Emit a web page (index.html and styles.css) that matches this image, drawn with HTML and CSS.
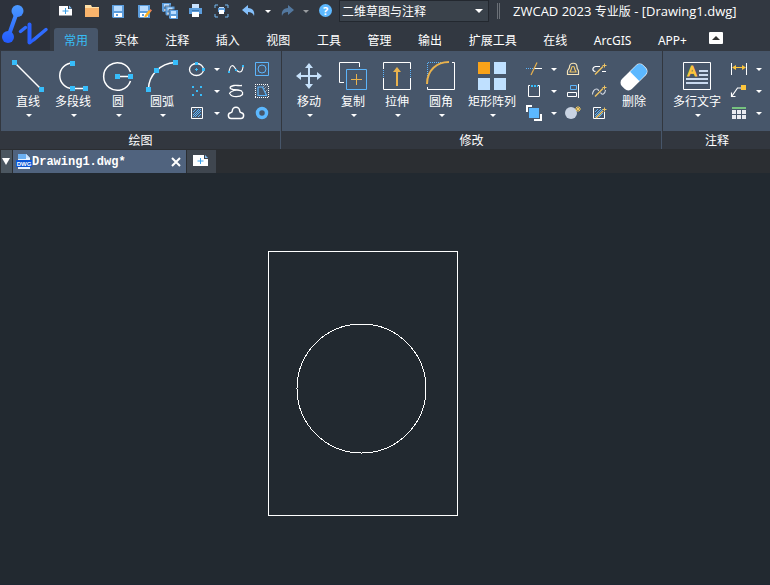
FILE: index.html
```html
<!DOCTYPE html>
<html lang="zh-CN">
<head>
<meta charset="utf-8">
<title>ZWCAD 2023</title>
<link rel="stylesheet" href="styles.css">
</head>
<body>
<header class="header">
  <button class="logo" aria-label="ZWCAD">
    <svg width="50" height="50" viewBox="0 0 50 50" fill="none" stroke-linecap="round" stroke-linejoin="round">
      <defs><linearGradient id="brand" gradientUnits="userSpaceOnUse" x1="0" y1="6" x2="0" y2="44"><stop offset="0" stop-color="#4a98ff"/><stop offset="1" stop-color="#2158ff"/></linearGradient></defs>
      <path d="M17 12 8.500 36" stroke="url(#brand)" stroke-width="4"/>
      <path d="m20.500 31.500 5-4M34 39.500 46 29.500" stroke="#2f6cff" stroke-width="3.500"/>
      <path d="M29.500 24.500V42.500" stroke="#2960ff" stroke-width="4"/>
      <path d="m30 42.500 4-3" stroke="#2960ff" stroke-width="3"/>
      <g fill="url(#brand)"><circle cx="17.500" cy="11" r="6"/><circle cx="8" cy="37" r="6"/></g>
    </svg>
  </button>
  <div class="header-main">
    <div class="quickbar">
      <button class="quick" aria-label="新建"><svg class="ico" viewBox="0 0 16 16"><path d="M2 3h9v3h4v6.500H2z" fill="#fff"/><path d="M12 2.500 15 5.500h-3z" fill="#7fbdf5"/><path d="M8.500 5v6M5.500 8h6" stroke="#3aa0e8"/></svg></button>
      <button class="quick" aria-label="打开"><svg class="ico" viewBox="0 0 16 16"><path d="M2 2h6l1 2h7v4H2z" fill="#ffe0a6"/><path d="M2 5h14v9H2z" fill="#f9b46c"/></svg></button>
      <button class="quick" aria-label="保存"><svg class="ico" viewBox="0 0 16 16"><path d="M3 2h12v13H4l-1-1z" fill="#5c9ddc"/><path d="M5 3h8v5H5z" fill="#b9dcff"/><path d="M5 10h8v4H5z" fill="#fff"/><path d="M7 11h2v2H7z" fill="#5c9ddc"/></svg></button>
      <button class="quick" aria-label="另存为"><svg class="ico" viewBox="0 0 16 16"><path d="M3 2h12v13H4l-1-1z" fill="#5c9ddc"/><path d="M5 3h8v5H5z" fill="#b9dcff"/><path d="M5 10h8v4H5z" fill="#fff"/><path d="M7 11h2v2H7z" fill="#5c9ddc"/><path d="m9 15 1-3 4-5 2 1.500-4 5z" fill="#ffb320"/><path d="m14 8 1.500-2L17 7.500 15.500 9z" fill="#e98158"/></svg></button>
      <button class="quick" aria-label="全部保存"><svg class="ico" viewBox="0 0 16 16"><g id="disk"><path d="M1 0h9v9H2L1 8z" fill="#5c9ddc"/><path d="M3 1h5v3H3z" fill="#b9dcff"/><path d="M3 6h5v2H3z" fill="#fff"/></g><use href="#disk" x="3.500" y="3.500"/><use href="#disk" x="7" y="7"/><path d="M4 9V3h7M8 13V6.500h6" fill="none" stroke="#323842" stroke-width=".6"/></svg></button>
      <button class="quick" aria-label="打印"><svg class="ico" viewBox="0 0 16 16"><path d="M5 1h7v4H5z" fill="#c8e2ff"/><path d="M2 5h13v6H2z" fill="#5c9ddc"/><path d="M5 7h7v1H5z" fill="#3e78b0"/><path d="M5 9h7v5H5z" fill="#fff"/></svg></button>
      <button class="quick" aria-label="打印预览"><svg class="ico" viewBox="0 0 16 16"><path d="M2 5V2h3M12 2h3v3M15 11v3h-3M5 14H2v-3" fill="none" stroke="#75b8f0"/><path d="M6 4h5v2H6z" fill="#c8e2ff"/><path d="M5 5h7v4H5z" fill="#5c9ddc"/><path d="M6 7h5v4H6z" fill="#fff"/></svg></button>
      <button class="quick undo" aria-label="撤销"><svg class="ico" viewBox="0 0 16 16"><path d="m1 7 6-5v3c5 0 7 4 6 8-1-3-3-4-6-4v3z" fill="#85c0fb"/></svg></button>
      <button class="drop" aria-label="撤销列表"><span class="caret"></span></button>
      <button class="quick" aria-label="重做"><svg class="ico" viewBox="0 0 16 16"><path d="M15 7 9 2v3C4 5 2 9 3 13c1-3 3-4 6-4v3z" fill="#53789f"/></svg></button>
      <button class="drop dim" aria-label="重做列表"><span class="caret"></span></button>
      <button class="quick" aria-label="帮助"><svg class="ico" viewBox="0 0 16 16"><circle cx="8.500" cy="7.500" r="6.500" fill="#5db8ff"/><text x="8.500" y="11.500" class="help-mark">?</text></svg></button>
      <label class="workspace"><select aria-label="工作空间"><option>二维草图与注释</option></select></label>
      <span class="grip"></span>
      <h1 class="title">ZWCAD 2023 <span class="cjk">专业版</span> - [Drawing1.dwg]</h1>
    </div>
    <div class="tabrow">
      <nav class="tabs">
        <button class="tab active">常用</button>
        <button class="tab">实体</button>
        <button class="tab">注释</button>
        <button class="tab">插入</button>
        <button class="tab">视图</button>
        <button class="tab">工具</button>
        <button class="tab">管理</button>
        <button class="tab">输出</button>
        <button class="tab">扩展工具</button>
        <button class="tab">在线</button>
        <button class="tab">ArcGIS</button>
        <button class="tab">APP+</button>
      </nav>
      <button class="collapse" aria-label="最小化功能区"></button>
    </div>
  </div>
</header>

<section class="ribbon">
  <section class="group">
    <div class="tools">
      <button class="tool"><svg class="big" viewBox="0 0 32 32"><path d="m2 2 27 27" stroke="#fff" stroke-width="1.500"/><path d="M0 0h5v5H0zM27 27h5v5h-5z" fill="#37bdfb"/></svg>直线<span class="caret"></span></button>
      <button class="tool mid"><svg class="big" viewBox="0 0 32 32"><path d="M15.500 3a12.700 12.700 0 0 0 0 25.500H28" fill="none" stroke="#fff" stroke-width="1.500"/><path d="M13 1h5v5h-5zM13 26h5v5h-5zM26 26h5v5h-5z" fill="#37bdfb"/></svg>多段线<span class="caret"></span></button>
      <button class="tool"><svg class="big" viewBox="0 0 32 32"><path d="M28.500 12a13.800 13.800 0 1 0 0 9M15 16.500h13" fill="none" stroke="#fff" stroke-width="1.500"/><path d="M13 14h5v5h-5zM26 14h5v5h-5z" fill="#37bdfb"/></svg>圆<span class="caret"></span></button>
      <button class="tool"><svg class="big" viewBox="0 0 32 32"><path d="M2.500 29C2.500 16 14 3 29 2.500" fill="none" stroke="#fff" stroke-width="1.500"/><path d="M0 27h5v5H0zM8 8h5v5H8zM27 0h5v5h-5z" fill="#37bdfb"/></svg>圆弧<span class="caret"></span></button>
      <div class="minis draw">
        <button class="mini" aria-label="椭圆"><svg class="ico" viewBox="0 0 16 16"><ellipse cx="7.500" cy="8.500" rx="7" ry="6" fill="none" stroke="#fff" stroke-width="1.300"/><path d="M6 1h3v3H6zM13 7h3v3h-3zM7 7h1v1h1v1H8v1H7V9H6V8h1z" fill="#37bdfb"/></svg></button>
        <button class="drop" aria-label="椭圆选项"><span class="caret"></span></button>
        <button class="mini" aria-label="样条曲线"><svg class="ico" viewBox="0 0 16 16"><path d="M1 11C2 4 5 3 7 7s7 7 8-1" fill="none" stroke="#fff" stroke-width="1.100"/><path d="M0 10h2v2H0zM7 8h2v2H7zM14 4h2v2h-2z" fill="#37bdfb"/></svg></button>
        <button class="mini" aria-label="面域"><svg class="ico" viewBox="0 0 16 16" fill="none" stroke="#5cb4fa"><path d="M1.500 1.500h13v13h-13z"/><circle cx="8" cy="8" r="4"/></svg></button>
        <button class="mini" aria-label="点"><svg class="ico" viewBox="0 0 16 16"><path d="M3 3h2v2H3zM11 3h2v2h-2zM7 7h2v2H7zM3 11h2v2H3zM11 11h2v2h-2z" fill="#37bdfb"/></svg></button>
        <button class="drop" aria-label="点选项"><span class="caret"></span></button>
        <button class="mini" aria-label="螺旋"><svg class="ico" viewBox="0 0 16 16"><path d="M14 2.500C11 3 9 2 6 2.500 1 3.500 1 6 5 6.500c4 .2 9 0 9 2.500M14 8C11 7 9 6.500 6 7.500c-3 1-4.500 1.500-4.500 3.500M2 11c2 3.500 10 3.500 12.500.500V9" fill="none" stroke="#fff" stroke-width="1.300"/></svg></button>
        <button class="mini" aria-label="边界"><svg class="ico" viewBox="0 0 16 16" fill="none"><path d="M1 1.500h14M1 14.500h14M1.500 3v11M14.500 3v11" stroke="#fff" stroke-dasharray="1 1"/><path d="M4 4h4.500L12.500 12.500H4z" stroke="#5cb4fa" stroke-width="1.200"/><path d="m9 4 2-2M10 6l4-4M11 9l3-3" stroke="#d6e8fb" stroke-width=".8" stroke-dasharray="1 1"/></svg></button>
        <button class="mini" aria-label="图案填充"><svg class="ico" viewBox="0 0 16 16" fill="none"><path d="M2.500 2.500h11v11h-11z" stroke="#fff"/><path d="m4 7 3-3M4 10l6-6M4 12l8-8M6 12l6-6M9 12l3-3" stroke="#5cb4fa"/></svg></button>
        <button class="drop" aria-label="填充选项"><span class="caret"></span></button>
        <button class="mini" aria-label="修订云线"><svg class="ico" viewBox="0 0 16 16"><path d="M3 13.500C0 13.500-.5 9 2 8c1.500-.3 2.300-.5 2.300-2a3.700 3.700 0 0 1 7.400 0c0 1.500.8 1.700 2.300 2 2.500 1 2 5.500-1 5.500z" fill="none" stroke="#fff" stroke-width="1.500"/></svg></button>
        <button class="mini" aria-label="圆环"><svg class="ico" viewBox="0 0 16 16"><circle cx="8" cy="8" r="4.500" fill="none" stroke="#5cb8ff" stroke-width="3.500"/></svg></button>
      </div>
    </div>
    <h2 class="group-title">绘图</h2>
  </section>

  <section class="group">
    <div class="tools">
      <button class="tool"><svg class="big" viewBox="0 0 32 32"><path d="M16 6v20M6 16h20" stroke="#c6e1fb" stroke-width="2"/><path d="m16 3 4 5h-8zM16 29l-4-5h8zM3 16l5-4v8zM29 16l-5 4v-8z" fill="#c6e1fb"/></svg>移动<span class="caret"></span></button>
      <button class="tool"><svg class="big" viewBox="0 0 32 32" fill="none"><path d="M7 22.500H2.500v-20h20V7" stroke="#fff"/><path d="M9.500 9.500h20v20h-20z" stroke="#5cb4fa"/><path d="M19.500 14v11M14 19.500h11" stroke="#e9b24d"/></svg>复制<span class="caret"></span></button>
      <button class="tool"><svg class="big" viewBox="0 0 32 32" fill="none"><path d="M2.500 9V2.500h27V9M2.500 18v11.500h27V18" stroke="#fff"/><path d="M2.500 10v8M29.500 10v8" stroke="#5cb4fa" stroke-dasharray="1 1"/><path d="M16 10v16" stroke="#e9b24d" stroke-width="2"/><path d="m16 7 4 5h-8z" fill="#e9b24d"/></svg>拉伸<span class="caret"></span></button>
      <button class="tool"><svg class="big" viewBox="0 0 32 32" fill="none"><path d="M27 2.500h2.500v27h-27V27" stroke="#fff"/><path d="M2.500 22V2.500H22" stroke="#5cb4fa" stroke-dasharray="1 1"/><path d="M2 24C2 10 12 2 24 2" stroke="#e9b24d" stroke-width="2"/></svg>圆角<span class="caret"></span></button>
      <button class="tool wide"><svg class="big" viewBox="0 0 32 32"><path d="M2 2h12v12H2z" fill="#f9a31a"/><path d="M18 2h12v12H18zM2 18h12v12H2zM18 18h12v12H18z" fill="#bfe0ff"/></svg>矩形阵列<span class="caret"></span></button>
      <div class="minis modify">
        <button class="mini" aria-label="修剪"><svg class="ico" viewBox="0 0 16 16" fill="none"><path d="M0 7.500h8" stroke="#5cb4fa" stroke-dasharray="1 1"/><path d="M8 7.500h8" stroke="#fff"/><path d="M11 1.500 5 14" stroke="#e9b24d" stroke-width="1.200"/></svg></button>
        <button class="drop" aria-label="修剪选项"><span class="caret"></span></button>
        <button class="mini" aria-label="偏移"><svg class="ico" viewBox="0 0 16 16" fill="none"><path d="M2.500 13.500V10C2.500 8.500 4.500 8.500 4.500 6c0-5 7.500-5 7.500 0 0 2.500 1.500 2.500 1.500 4v3.500z" stroke="#f5e3b8" stroke-width="1.200"/><path d="M5 11h6c0-1.500-1.500-2-1.500-4S6.500 5 6.500 7 5 9.500 5 11z" stroke="#efc463" stroke-width="1.200"/></svg></button>
        <button class="mini" aria-label="打断"><svg class="ico" viewBox="0 0 16 16" fill="none"><path d="M9 5.500H4.500C1 6.500 1 10 4.500 10.500M11 10.500h4" stroke="#fff" stroke-width="1.200"/><path d="m4 13.500 8-8" stroke="#efc463" stroke-width="1.500"/><path d="M13.500 2.500v4M11.500 4.500h4" stroke="#efc463"/></svg></button>
        <button class="mini" aria-label="打断于点"><svg class="ico" viewBox="0 0 16 16" fill="none"><path d="M4 2.500H2.500v11h11v-11H12" stroke="#fff"/><path d="M5 2h2v2H5zM8 2h2v2H8zM11 2h1v2h-1z" fill="#37bdfb"/></svg></button>
        <button class="drop" aria-label="打断选项"><span class="caret"></span></button>
        <button class="mini" aria-label="对齐"><svg class="ico" viewBox="0 0 16 16" fill="none"><path d="M2.500 9.500h9v4h-9zM13.500 1v14" stroke="#fff"/><path d="M5.500 2.500h6v4h-6z" stroke="#5cb4fa"/></svg></button>
        <button class="mini" aria-label="编辑样条曲线"><svg class="ico" viewBox="0 0 16 16" fill="none"><path d="M1.500 11.500c0-3 2-5.500 4-5.500 1.500 0 2 1 2 2M9.500 9.500c1.500 3 4.500 2 5-2.500" stroke="#d5dbe5" stroke-width="1.100"/><path d="m4 13.500 8-8" stroke="#efc463" stroke-width="1.500"/><path d="M13.500 2.500v4M11.500 4.500h4" stroke="#efc463"/></svg></button>
        <button class="mini" aria-label="绘图次序"><svg class="ico" viewBox="0 0 16 16"><path d="M0 0h6v2H2v5H0zM14 9h2v7H8v-2h6z" fill="#fff"/><path d="M3 3h10v10H3z" fill="#5cb8ff"/></svg></button>
        <button class="drop" aria-label="次序选项"><span class="caret"></span></button>
        <button class="mini" aria-label="分解"><svg class="ico" viewBox="0 0 16 16"><circle cx="6" cy="8" r="6" fill="#c9d3e2"/><path d="M13 1v6M10 4h6M11 2l4 4M15 2l-4 4" stroke="#f4c95c"/></svg></button>
        <button class="mini" aria-label="编辑填充"><svg class="ico" viewBox="0 0 16 16" fill="none"><path d="M10 2.500H2.500v11h11V7" stroke="#fff"/><path d="m4 7 3-3M4 10l6-6M4 12l8-8M8 12l4-4" stroke="#5cb4fa"/><path d="m5 13 7-7" stroke="#efc463" stroke-width="1.500"/><path d="M13.500 2.500v4M11.500 4.500h4" stroke="#efc463"/></svg></button>
      </div>
      <button class="tool"><svg class="big" viewBox="0 0 32 32"><g transform="translate(16 17) rotate(-45)"><rect x="-15" y="-7" width="30" height="14" rx="5" fill="#fff"/><path d="M1-6.500h9a4.500 4.500 0 0 1 4.500 4.500v4a4.500 4.500 0 0 1-4.500 4.500H1z" fill="#5cb8ff"/></g></svg>删除</button>
    </div>
    <h2 class="group-title">修改</h2>
  </section>

  <section class="group last">
    <div class="tools">
      <button class="tool wide"><svg class="big" viewBox="0 0 32 32" fill="none"><path d="M2.500 2.500h27v27h-27z" stroke="#fff"/><path d="M18 11h9M18 15h9M5 19h22M5 23h22" stroke="#c9d9ee" stroke-width="2"/><text x="11" y="16" class="mtext-mark">A</text></svg>多行文字<span class="caret"></span></button>
      <div class="minis annotate">
        <button class="mini" aria-label="标注"><svg class="ico" viewBox="0 0 16 16"><path d="M.5 2v12M15.500 2v12" stroke="#fff"/><path d="M3 6.500h10" stroke="#fcc53c"/><path d="m1 6.500 4-2.500v5zM15 6.500 11 4v5z" fill="#fcc53c"/></svg></button>
        <button class="drop" aria-label="标注选项"><span class="caret"></span></button>
        <button class="mini" aria-label="引线"><svg class="ico" viewBox="0 0 16 16"><path d="M10 5H6.500L1 13M.5 9.500v4h4" fill="none" stroke="#fff" stroke-width="1.200"/><path d="M10 2h5v5h-5z" fill="#fcc53c"/></svg></button>
        <button class="drop" aria-label="引线选项"><span class="caret"></span></button>
        <button class="mini" aria-label="表格"><svg class="ico" viewBox="0 0 16 16"><path d="M1 2h14v2H1z" fill="#76c27f"/><path d="M1 5h4v4H1zM6 5h4v4H6zM11 5h4v4h-4zM1 10h4v4H1zM6 10h4v4H6zM11 10h4v4h-4z" fill="#e9eaf0"/></svg></button>
        <button class="drop" aria-label="表格选项"><span class="caret"></span></button>
      </div>
    </div>
    <h2 class="group-title">注释</h2>
  </section>
</section>

<nav class="files">
  <button class="file-list" aria-label="文件列表"></button>
  <div class="file">
    <svg class="ico" viewBox="0 0 16 16"><path d="M2 0h8l4 4v11H2z" fill="#e8f2ff"/><path d="M2 0h8v5H2z" fill="#6cb0f2"/><path d="m10 0 4 4h-4z" fill="#c8e2ff"/><path d="M0 6h16v7H0z" fill="#0a55d8"/><text x="8" y="12" class="dwg-mark">DWG</text></svg>
    <span class="file-name">Drawing1.dwg*</span>
    <button class="close" aria-label="关闭"><svg width="10" height="10" viewBox="0 0 10 10"><path d="m1 1 8 8M9 1 1 9" stroke="#fff" stroke-width="2"/></svg></button>
  </div>
  <button class="add" aria-label="新建图形"><svg class="ico" viewBox="0 0 16 16"><path d="M0 2h11v4h4v7H0z" fill="#fff"/><path d="m12 2 3 3h-3z" fill="#7fbdf5"/><path d="M7.500 5v6M4.500 8h6" stroke="#3aa0e8"/></svg></button>
</nav>

<main class="canvas">
  <svg class="drawing" fill="none" stroke="#fff" shape-rendering="crispEdges">
    <rect x="268.500" y="77.500" width="189" height="264"/>
    <circle cx="361.500" cy="214.500" r="64.500"/>
  </svg>
</main>
</body>
</html>
```
FILE: styles.css
```css
* { box-sizing: border-box; }

body {
  margin: 0;
  min-height: 100vh;
  display: flex;
  flex-direction: column;
  background: #222930;
  color: #fff;
  font: 12px/18px "Noto Sans", "Noto Sans CJK SC", sans-serif;
}

button, select {
  margin: 0;
  padding: 0;
  border: 0;
  background: none;
  color: inherit;
  font: inherit;
}

h1, h2 { margin: 0; font: inherit; }
svg { display: block; }
.ico { width: 16px; height: 16px; overflow: visible; flex: none; }
.big { width: 32px; height: 32px; margin-bottom: 1px; flex: none; }

.caret {
  width: 0;
  height: 0;
  border: 3px solid transparent;
  border-top-color: #fff;
  border-bottom: 0;
}

.header { display: flex; background: #323841; }
.logo { width: 50px; height: 50px; background: #2d323c; flex: none; }
.header-main { flex: 1; min-width: 0; }

.quickbar { display: flex; align-items: center; height: 22px; padding-left: 2px; }
.quick { width: 26px; height: 22px; display: grid; place-items: center; flex: none; }
.undo { margin-left: 2px; }
.drop { width: 13px; height: 22px; display: grid; place-items: center; flex: none; }
.quickbar .drop { width: 12px; }
.dim { opacity: .5; }
.help-mark { font: 700 11px "Noto Sans", sans-serif; fill: #fff; text-anchor: middle; }

.workspace { position: relative; width: 150px; height: 22px; margin-left: 1px; flex: none; }
.workspace select {
  width: 100%;
  height: 22px;
  padding: 1px 20px 0 2px;
  appearance: none;
  background: #3a424b;
  border: 1px solid #23282f;
}
.workspace::after {
  content: "";
  position: absolute;
  right: 6px;
  top: 9px;
  border: 4px solid transparent;
  border-top-color: #fff;
  border-bottom: 0;
  pointer-events: none;
}
.grip { width: 3px; height: 16px; margin: 0 13px 0 8px; border: solid #6b7077; border-width: 0 1px; flex: none; }
.title { font-family: "Open Sans", "Noto Sans CJK SC", sans-serif; font-size: 13px; white-space: nowrap; }
.title .cjk { font-size: 12px; }

.tabrow { display: flex; align-items: center; margin-top: 6px; padding: 0 47px 0 4px; }
.tabs { flex: 1; max-width: 645px; display: flex; justify-content: space-between; padding-right: 2px; }
.tab { height: 23px; padding: 2px 10px 0; border-radius: 3px 3px 0 0; white-space: nowrap; }
.active { background: #47566a; color: #38bdf5; }
.collapse {
  width: 14px;
  height: 12px;
  margin: 0 0 4px 10px;
  display: grid;
  place-items: center;
  background: #fff;
  border-radius: 1px;
}
.collapse::before { content: ""; border: 4px solid transparent; border-bottom-color: #333; border-top: 0; }

.ribbon { display: flex; gap: 1px; padding-left: 1px; background: #32373f; }
.group { display: flex; flex-direction: column; }
.last { flex: 1; }
.tools { display: flex; height: 80px; padding: 7px 6px 0 5px; background: #47566a; }
.tool { width: 44px; padding-top: 2px; display: flex; flex-direction: column; align-items: center; white-space: nowrap; }
.tool .caret { margin: 3px 0 0 2px; }
.mid { width: 46px; }
.wide { width: 58px; }
.minis { display: grid; grid-auto-rows: 22px; align-content: start; }
.mini { display: grid; place-items: center; }
.draw { grid-template-columns: 26px 13px 26px 26px; }
.modify { grid-template-columns: 26px 13px 26px 26px; }
.annotate { grid-template-columns: 26px 13px; }
.mtext-mark { font: 14px "Noto Sans", sans-serif; fill: #fcc53c; stroke: #fcc53c; stroke-width: 1px; text-anchor: middle; }
.group-title { height: 18px; line-height: 20px; text-align: center; border-right: 1px solid #47566a; }
.last .group-title { border: 0; }

.files { display: flex; gap: 1px; height: 24px; padding: 1px 0 0 1px; background: #2b2e32; }
.file-list { width: 11px; display: grid; place-items: center; background: #4b5660; }
.file-list::before { content: ""; margin-right: 2px; border: 4px solid transparent; border-top: 7px solid #fff; border-bottom: 0; }
.file { width: 173px; display: flex; align-items: center; padding: 0 4px 0 3px; background: #50637e; }
.file-name { font: 700 12px/18px "Liberation Mono", monospace; }
.close { margin-left: auto; width: 12px; height: 18px; display: grid; place-items: center; }
.add { width: 29px; padding: 0 2px 2px 0; display: grid; place-items: center; background: #3f464f; }
.dwg-mark { font: 700 6px "Liberation Sans", sans-serif; fill: #fff; text-anchor: middle; }

.canvas { flex: 1; display: flex; margin-top: 1px; border-bottom: 1px solid #1f2733; }
.drawing { flex: 1; min-height: 410px; }
```
